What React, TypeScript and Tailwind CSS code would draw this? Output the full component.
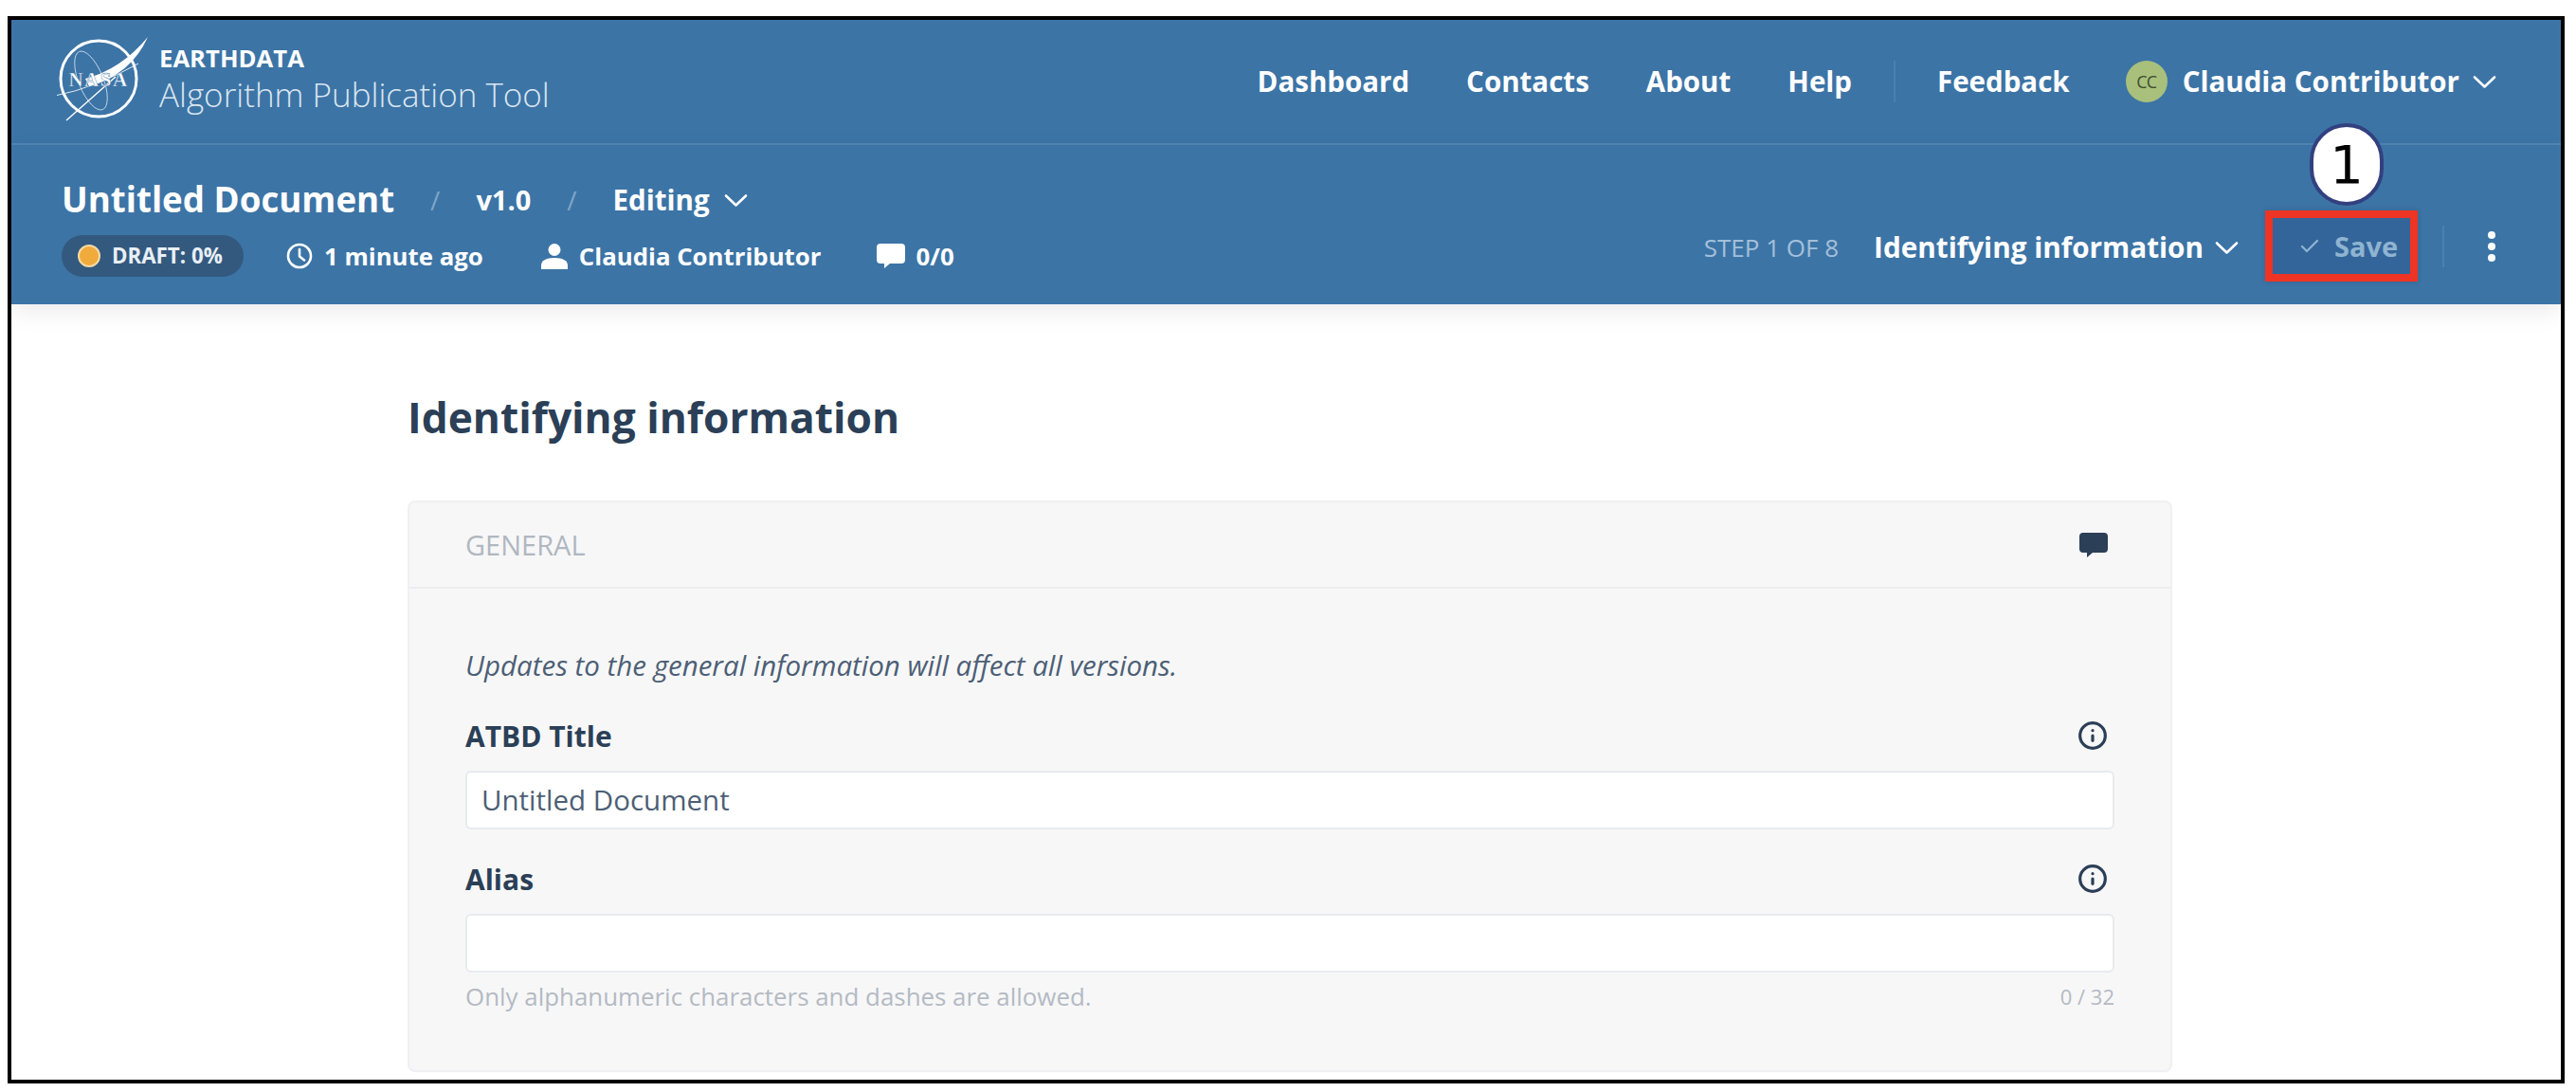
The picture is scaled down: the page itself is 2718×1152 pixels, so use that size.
import React from "react";
import { Check, Info } from "lucide-react";

function Chevron({ className }: { className: string }) {
  return (
    <svg viewBox="0 0 25 15" className={className} fill="none" stroke="currentColor" strokeWidth="2.6" strokeLinecap="round" strokeLinejoin="round">
      <path d="M2 2.5l10.5 10 10.500-10" />
    </svg>
  );
}

function NasaLogo() {
  return (
    <svg viewBox="0 0 100 100" className="w-[100px] h-[100px] shrink-0 mb-[6px]" fill="none">
      <circle cx="44" cy="50" r="40" stroke="#fff" strokeWidth="3" />
      <ellipse cx="36" cy="52" rx="13" ry="33" stroke="#cfe0ee" strokeWidth="0.8" transform="rotate(-22 36 52)" />
      <path d="M-2 68 Q40 60 86 34" stroke="#dfeaf3" strokeWidth="1" />
      <path d="M10 94 L62 48" stroke="#fff" strokeWidth="1.4" />
      <path d="M30 50 Q68 40 96 6 Q78 46 34 58 Z" fill="#fff" />
      <text x="44" y="58" textAnchor="middle" fontFamily="'Liberation Serif', serif" fontWeight="700" fontSize="21" letterSpacing="1.5" fill="#fff" stroke="#3c74a6" strokeWidth="0.4">NASA</text>
    </svg>
  );
}

function ClockIcon() {
  return (
    <svg viewBox="0 0 28 28" className="w-[28px] h-[28px] shrink-0" fill="none" stroke="#fff" strokeWidth="2.6">
      <circle cx="14" cy="14" r="12" />
      <path d="M14 7v7.500l5 4" strokeLinecap="round" />
    </svg>
  );
}

function UserIcon() {
  return (
    <svg viewBox="0 0 30 28" className="w-[30px] h-[28px] shrink-0" fill="#fff">
      <circle cx="15" cy="7.5" r="6.5" />
      <path d="M1 28v-4c0-5 5-8 14-8s14 3 14 8v4z" />
    </svg>
  );
}

function CommentIcon({ color, className }: { color: string; className: string }) {
  return (
    <svg viewBox="0 0 30 26" className={className} fill={color}>
      <path d="M4 0h22a4 4 0 0 1 4 4v13a4 4 0 0 1-4 4H14l-6 5v-5H4a4 4 0 0 1-4-4V4a4 4 0 0 1 4-4z" />
    </svg>
  );
}

function Field({ label, value }: { label: string; value?: string }) {
  return (
    <div>
      <div className="flex items-center justify-between h-[40px] pr-[7px]">
        <span className="text-[30px] font-bold text-[#2b3f57]">{label}</span>
        <Info className="w-[32px] h-[32px] text-[#2b3f57]" strokeWidth={2.4} />
      </div>
      <div className="mt-[17px] h-[62px] rounded-[6px] bg-white border-2 border-[#e8eaed] flex items-center pl-[15px] text-[29.5px] text-[#4d5f75]">
        {value}
      </div>
    </div>
  );
}

export default function App() {
  return (
    <div className="w-[2718px] h-[1152px] bg-white pt-[17px] pl-[8px] pr-[12px] pb-[9px] font-['Open_Sans',sans-serif]">
      <div className="relative h-full border-4 border-black overflow-hidden flex flex-col bg-white">
        <header className="h-[132px] shrink-0 bg-[#3c74a6] border-b-2 border-[#5085b3] flex items-center pl-[48px] pr-[68px] text-white">
          <NasaLogo />
          <div className="ml-[8px] mb-[3px] flex flex-col">
            <span className="text-[25.7px] leading-[28px] font-bold">EARTHDATA</span>
            <span className="mt-[3px] text-[35px] leading-[42px] font-light text-[#dbe6f0]">Algorithm Publication Tool</span>
          </div>
          <nav className="ml-auto flex items-center text-[29.5px] font-bold">
            <span>Dashboard</span>
            <span className="ml-[60px]">Contacts</span>
            <span className="ml-[60px]">About</span>
            <span className="ml-[60px]">Help</span>
            <span className="ml-[44px] w-[2px] h-[44px] bg-[#4a80af]" />
            <span className="ml-[44px]">Feedback</span>
            <span className="ml-[59px] w-[44px] h-[44px] rounded-full bg-[#a8c07c] text-[#3d4f2e] text-[18px] font-normal flex items-center justify-center tracking-[-1px]">CC</span>
            <span className="ml-[16px]">Claudia Contributor</span>
            <Chevron className="ml-[14px] w-[25px] h-[15px]" />
          </nav>
        </header>

        <section className="h-[168px] shrink-0 bg-[#3c74a6] flex pl-[53px] pr-[69px] text-white shadow-[0_8px_24px_rgba(0,0,0,0.08)] z-10">
          <div className="pt-[35px]">
            <div className="flex items-center h-[46px]">
              <span className="text-[36.7px] font-bold">Untitled Document</span>
              <span className="ml-[38px] text-[28px] text-[#7fa5c7]">/</span>
              <span className="ml-[38px] text-[29px] font-bold">v1.0</span>
              <span className="ml-[38px] text-[28px] text-[#7fa5c7]">/</span>
              <span className="ml-[38px] text-[29.5px] font-bold">Editing</span>
              <Chevron className="ml-[15px] w-[25px] h-[15px]" />
            </div>
            <div className="mt-[14px] flex items-center h-[44px] text-[25.8px] font-bold">
              <span className="w-[192px] h-[44px] rounded-full bg-[#33597f] flex items-center pl-[17px]">
                <span className="w-[24px] h-[24px] rounded-full bg-[#f0ab3c] border-2 border-[#f7d9a4]" />
                <span className="ml-[12px] text-[22.3px] font-bold text-[#e9eff5]">DRAFT: 0%</span>
              </span>
              <span className="ml-[45px] flex items-center gap-[12px]"><ClockIcon />1 minute ago</span>
              <span className="ml-[60px] flex items-center gap-[11px]"><UserIcon />Claudia Contributor</span>
              <span className="ml-[59px] flex items-center gap-[11px]"><CommentIcon color="#fff" className="w-[30px] h-[26px]" />0/0</span>
            </div>
          </div>

          <div className="ml-auto flex items-center self-end pb-[24px] h-[99px]">
            <span className="mt-[4px] text-[26px] text-[#a4c0da]">STEP 1 OF 8</span>
            <span className="ml-[37px] mt-[4px] text-[29.7px] font-bold">Identifying information</span>
            <Chevron className="ml-[12px] mt-[4px] w-[25px] h-[15px]" />
            <div className="ml-[28px] w-[161px] h-[75px] border-[8px] border-[#ee3424] bg-[#33659a] flex items-center pl-[27px] text-[#8fb4d2] text-[29px] font-bold shadow-[0_0_6px_rgba(0,0,0,0.15)]">
              <Check className="w-[24px] h-[24px]" strokeWidth={2.2} />
              <span className="ml-[14px]">Save</span>
            </div>
            <span className="ml-[26px] w-[2px] h-[44px] bg-[#4a80af]" />
            <span className="ml-[46px] flex flex-col gap-[4px]">
              <span className="w-[8px] h-[8px] rounded-full bg-white" />
              <span className="w-[8px] h-[8px] rounded-full bg-white" />
              <span className="w-[8px] h-[8px] rounded-full bg-white" />
            </span>
          </div>
        </section>

        <main className="flex-1 pl-[418px] pr-[410px] pt-[90px]">
          <h1 className="text-[44.3px] leading-[58px] font-bold text-[#2b3f57]">Identifying information</h1>
          <div className="mt-[59px] h-[603px] rounded-[8px] bg-[#f7f7f8] border-2 border-[#f0f0f2]">
            <div className="h-[91px] border-b-2 border-[#ecedef] flex items-center justify-between pl-[59px] pr-[66px]">
              <span className="text-[29px] text-[#b0b7c0]">GENERAL</span>
              <CommentIcon color="#2b3f57" className="w-[30px] h-[26px]" />
            </div>
            <div className="pl-[59px] pr-[59px] pt-[62px]">
              <p className="text-[29.5px] leading-[38px] italic text-[#4d5f75]">Updates to the general information will affect all versions.</p>
              <div className="mt-[35px]">
                <Field label="ATBD Title" value="Untitled Document" />
              </div>
              <div className="mt-[32px]">
                <Field label="Alias" />
              </div>
              <div className="mt-[6px] flex items-center justify-between text-[25.9px] text-[#b4bac3]">
                <span>Only alphanumeric characters and dashes are allowed.</span>
                <span className="text-[22px]">0 / 32</span>
              </div>
            </div>
          </div>
        </main>

        <div className="absolute left-[2425px] top-[109px] w-[78px] h-[87px] rounded-full bg-white border-[4px] border-[#33407f] z-20 flex items-center justify-center text-black text-[56px] font-['DejaVu_Sans',sans-serif]">
          1
        </div>
      </div>
    </div>
  );
}
